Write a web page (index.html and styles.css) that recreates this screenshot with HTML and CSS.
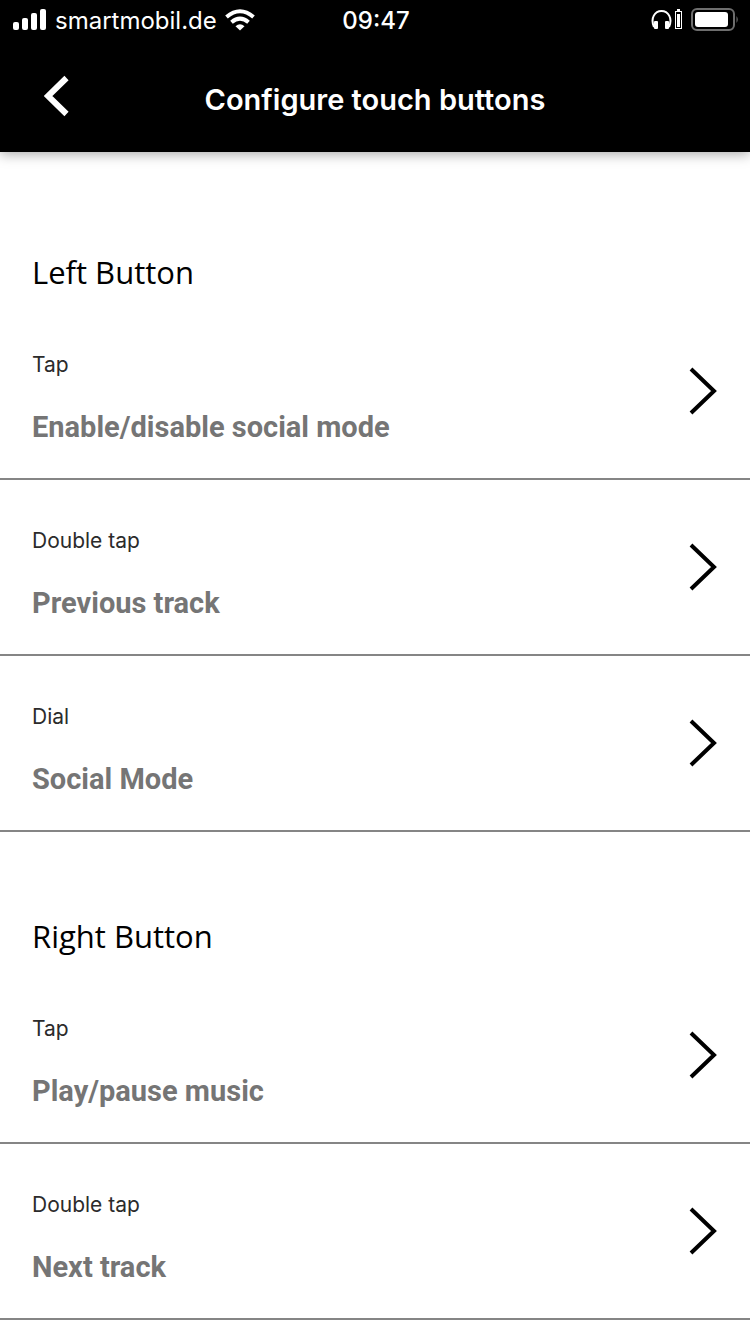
FILE: index.html
```
<!DOCTYPE html>
<html lang="en">
<head>
  <meta charset="UTF-8" />
  <meta name="viewport" content="width=device-width, initial-scale=1.0" />
  <title>Configure touch buttons</title>
  <link rel="stylesheet" href="styles.css">
</head>
<body>
  <!-- Shared chevron for the rows -->
  <svg class="sprite" aria-hidden="true">
    <symbol id="chevron" viewBox="0 0 30 50">
      <path d="M3 3 L26 25 L3 47" fill="none" stroke="currentColor" stroke-width="4" />
    </symbol>
  </svg>

  <header class="top">
    <!-- Phone status bar -->
    <div class="status-bar">
      <div class="status-left">
        <svg width="34" height="22" viewBox="0 0 34 22" fill="#fff" aria-hidden="true">
          <rect x="0" y="13" width="6" height="8" rx="2" />
          <rect x="9" y="9" width="6" height="12" rx="2" />
          <rect x="18" y="4" width="6" height="17" rx="2" />
          <rect x="27" y="0" width="6" height="21" rx="2" />
        </svg>
        <span class="carrier">smartmobil.de</span>
        <svg width="30" height="22" viewBox="0 0 30 22" aria-hidden="true">
          <g fill="none" stroke="#fff" stroke-width="4">
            <path d="M1.5 8 Q15 -3.5 28.500 8" />
            <path d="M6.500 13.300 Q15 6 23.500 13.300" />
          </g>
          <path d="M15 21.500 L10.500 17.200 Q15 13.500 19.500 17.200 Z" fill="#fff" />
        </svg>
      </div>
      <span class="clock">09:47</span>
      <div class="status-right">
        <svg width="32" height="22" viewBox="0 0 32 22" aria-hidden="true">
          <path d="M3 18 C-1 9 4 2 10.500 2 C17 2 22 9 18 18" fill="none" stroke="#fff" stroke-width="2" />
          <rect x="3" y="12" width="4" height="8" rx="1" fill="#fff" />
          <rect x="14" y="12" width="4" height="8" rx="1" fill="#fff" />
          <rect x="26" y="0" width="3" height="2" fill="#fff" />
          <rect x="24.500" y="2.500" width="6" height="17" fill="none" stroke="#fff" />
          <rect x="26" y="5" width="3" height="13" fill="#fff" />
        </svg>
        <svg width="48" height="24" viewBox="0 0 48 24" aria-hidden="true">
          <rect x="1" y="1" width="42" height="21" rx="5" fill="none" stroke="#6e6e6e" stroke-width="2" />
          <rect x="4" y="4" width="33" height="15" rx="3" fill="#fff" />
          <path d="M45.500 8 Q48 11.500 45.500 15 Z" fill="#6e6e6e" />
        </svg>
      </div>
    </div>

    <!-- Navigation -->
    <div class="nav-bar">
      <button class="back-button" type="button" aria-label="Back">
        <svg width="26" height="42" viewBox="0 0 26 42" aria-hidden="true">
          <path d="M22.500 3 L4 21 L22.500 39" fill="none" stroke="#fff" stroke-width="6" />
        </svg>
      </button>
      <h1>Configure touch buttons</h1>
    </div>
  </header>

  <main>
    <section>
      <h2>Left Button</h2>
      <a class="row" href="#left-tap">
        <span class="row-text">
          <span class="gesture">Tap</span>
          <span class="action">Enable/disable social mode</span>
        </span>
        <svg class="chevron" aria-hidden="true"><use href="#chevron" /></svg>
      </a>
      <a class="row" href="#left-double-tap">
        <span class="row-text">
          <span class="gesture">Double tap</span>
          <span class="action">Previous track</span>
        </span>
        <svg class="chevron" aria-hidden="true"><use href="#chevron" /></svg>
      </a>
      <a class="row" href="#left-dial">
        <span class="row-text">
          <span class="gesture">Dial</span>
          <span class="action">Social Mode</span>
        </span>
        <svg class="chevron" aria-hidden="true"><use href="#chevron" /></svg>
      </a>
    </section>

    <section>
      <h2>Right Button</h2>
      <a class="row" href="#right-tap">
        <span class="row-text">
          <span class="gesture">Tap</span>
          <span class="action">Play/pause music</span>
        </span>
        <svg class="chevron" aria-hidden="true"><use href="#chevron" /></svg>
      </a>
      <a class="row" href="#right-double-tap">
        <span class="row-text">
          <span class="gesture">Double tap</span>
          <span class="action">Next track</span>
        </span>
        <svg class="chevron" aria-hidden="true"><use href="#chevron" /></svg>
      </a>
    </section>
  </main>
</body>
</html>
```
FILE: styles.css
```
* {
  margin: 0;
  padding: 0;
  box-sizing: border-box;
}
body {
  font-family: Inter, "Liberation Sans", sans-serif;
  background: #fff;
  color: #000;
}
svg { display: block; }
.sprite {
  position: absolute;
  width: 0;
  height: 0;
}

/* Header */
.top {
  background: #000;
  color: #fff;
  box-shadow: 0 2px 12px rgba(0, 0, 0, 0.35);
}
.status-bar {
  display: grid;
  grid-template-columns: 1fr auto 1fr;
  align-items: center;
  height: 40px;
  padding: 0 11px 0 13px;
  font-size: 24px;
}
.status-left, .status-right {
  display: flex;
  align-items: center;
  gap: 8px;
}
.status-right { justify-content: flex-end; }
.clock { font-weight: 500; }
.nav-bar {
  display: grid;
  grid-template-columns: 80px 1fr 80px;
  align-items: center;
  height: 112px;
}
.back-button {
  display: flex;
  justify-content: flex-end;
  padding: 0 10px 0 0;
  border: none;
  background: none;
  cursor: pointer;
}
h1 {
  padding-top: 6px;
  font-size: 29px;
  font-weight: 600;
  text-align: center;
}

/* Button lists */
main { padding: 16px 0 14px; }
h2 {
  padding: 83px 32px 11px;
  font-family: "Open Sans", sans-serif;
  font-size: 31px;
  font-weight: 400;
  line-height: 42px;
}
.row {
  display: flex;
  align-items: center;
  justify-content: space-between;
  padding-right: 32px;
  border-bottom: 2px solid #858585;
  color: #000;
  text-decoration: none;
}
.row-text {
  display: flex;
  flex-direction: column;
  gap: 28px;
  padding: 45px 0 33px 32px;
}
.gesture {
  color: #2b2b2b;
  font-size: 21px;
  font-weight: 400;
  line-height: 32px;
}
.action {
  color: #757575;
  font-family: Roboto, "Liberation Sans", sans-serif;
  font-size: 29px;
  font-weight: 700;
  line-height: 36px;
}
.chevron {
  width: 30px;
  height: 50px;
}
```
